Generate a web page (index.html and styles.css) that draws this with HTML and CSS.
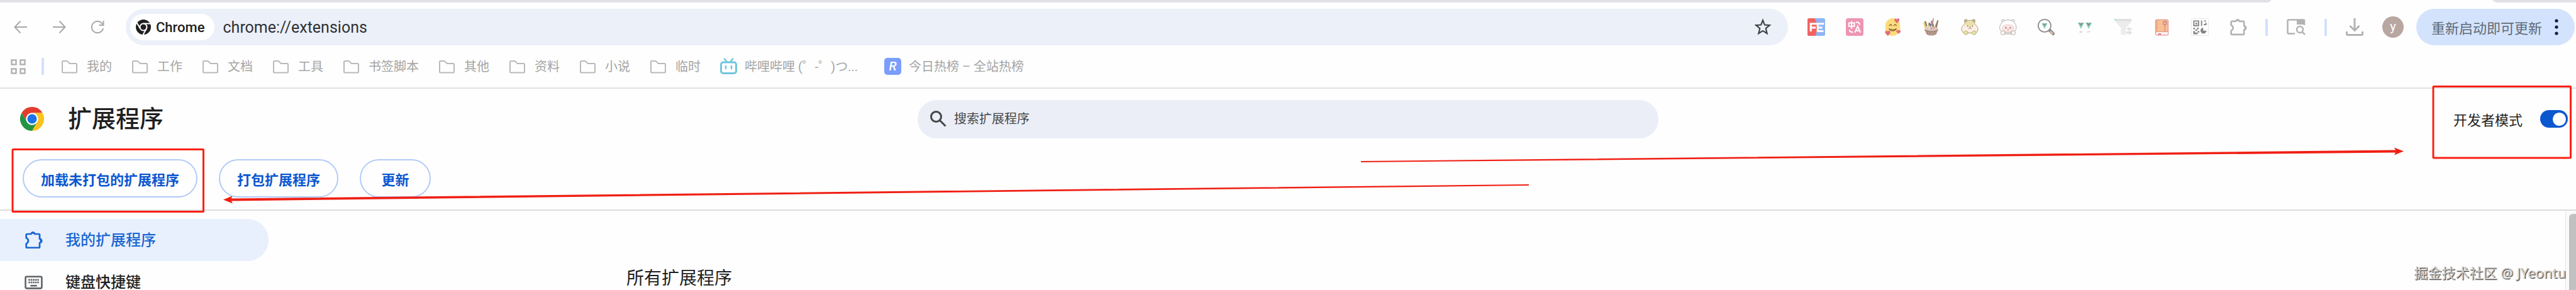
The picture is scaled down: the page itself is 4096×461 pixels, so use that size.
FILE: index.html
```html
<!DOCTYPE html>
<html lang="zh-CN">
<head>
    <meta charset="UTF-8">
    <meta name="viewport" content="width=device-width, initial-scale=1.0">
    <title>扩展程序</title>
    <link rel="stylesheet" href="styles.css">
</head>
<body>
    <!-- Icônes réutilisées -->
    <svg class="defs" aria-hidden="true">
        <symbol id="folder" viewBox="0 0 27 22">
            <path d="M2 19V3.500Q2 2 3.500 2H9.500L14 6H23.500Q25 6 25 7.500V19Q25 20.500 23.500 20.500H3.500Q2 20.500 2 19Z" fill="none" stroke="#b9b9b9" stroke-width="2"/>
        </symbol>
        <symbol id="puzzle" viewBox="0 0 32 32">
            <path d="M5 5.500H11.500A3.500 3.500 0 0 1 18 5.500H25Q26.500 5.500 26.500 7V14A3.500 3.500 0 0 1 26.500 21V28Q26.500 29.500 25 29.500H4.500Q3 29.500 3 28V22.500Q6.500 21 6.500 17.500Q6.500 14 3 12.500V7Q3 5.500 5 5.500Z" fill="none" stroke="currentColor" stroke-width="3" stroke-linejoin="round"/>
            <path d="M11 5a3.800 4 0 0 1 7.600 0zM27 13.500a4 3.800 0 0 1 0 7.600z" fill="currentColor"/>
        </symbol>
        <symbol id="vue" viewBox="0 0 12 12">
            <path d="M0 0H4L6 3.500L8 0H12L6 11.500Z" fill="#8cd6b6"/>
            <path d="M2.500 0H4.800L6 2L7.200 0H9.500L6 6.500Z" fill="#7d8a92"/>
        </symbol>
    </svg>

    <div class="tabstrip">
        <div class="strip-left"></div>
        <div class="strip-right"></div>
    </div>

    <!-- Barre d'outils -->
    <div class="toolbar">
        <div class="nav">
            <button aria-label="后退"><svg viewBox="0 0 22 22"><path d="M21 11H2M10.500 1.500L1.500 11L10.500 20.500"/></svg></button>
            <button aria-label="前进"><svg viewBox="0 0 22 22"><path d="M1 11H20M11.500 1.500L20.500 11L11.500 20.500"/></svg></button>
            <button aria-label="重新加载"><svg viewBox="0 0 22 22"><path d="M19 6.500A9.200 9.200 0 1 0 20 13M20.500 1V8H13.500"/></svg></button>
        </div>
        <div class="address">
            <span class="chip">
                <svg viewBox="0 0 24 24">
                    <circle cx="12" cy="12" r="12" fill="#1f1f1f"/>
                    <circle cx="12" cy="12" r="5.500" fill="none" stroke="#fff" stroke-width="2"/>
                    <path d="M12 6.500H24M7.200 14.800L1.500 5M16.800 14.800L11.500 24" stroke="#fff" stroke-width="2"/>
                </svg>
                Chrome
            </span>
            <input class="url" type="text" value="chrome://extensions" aria-label="地址">
            <button class="star" aria-label="收藏"><svg viewBox="0 0 26 26"><path d="M13 3L15.700 9.800L23 10.300L17.400 15L19.200 22.500L13 18.500L6.800 22.500L8.600 15L3 10.300L10.300 9.800Z"/></svg></button>
        </div>

        <div class="extensions">
            <svg viewBox="0 0 32 32">
                <rect width="32" height="32" rx="3" fill="#90b4f4"/>
                <path d="M3 0H13Q22 15 14 32H3Q0 32 0 29V3Q0 0 3 0Z" fill="#ef6461"/>
                <path d="M6 24V10H30M6 17H15M18.500 10V23.500H29M18.500 17H27" fill="none" stroke="#fff" stroke-width="3.500"/>
            </svg>
            <svg viewBox="0 0 32 32">
                <rect width="32" height="32" rx="4" fill="#ee94b4"/>
                <path d="M5.500 8.500H15.500V14.500H5.500ZM10.500 5V19M18 7.500H21Q25 7.500 25 12M6.500 21Q7 25.500 13 25.500M16.500 26L21.500 14.500L26.500 26M18 22.500H25" fill="none" stroke="#fff" stroke-width="2.300"/>
            </svg>
            <svg viewBox="0 0 32 32">
                <rect x="2" y="0" width="27" height="32" rx="13.500" fill="#fbdb7c"/>
                <path d="M9 14Q11.500 9 14 14M17.500 14Q20 9 22.500 14M8.500 19Q15.500 27 22.500 19Q15.500 23 8.500 19Z" fill="none" stroke="#8a6637" stroke-width="1.600"/>
                <path d="M23 9L18.500 4Q18 0 21 0.500L23 2Q25 -1 27.500 1.500Q28.500 5 23 9ZM6.500 32L2 27Q1 22 4.500 22.500L6.500 24Q9 21 11 24Q12 28 6.500 32ZM26 28L22 24.500Q21.500 21 24.500 21.500L26 22.500Q29 20 30 23.500Q30 26 26 28Z" fill="#e26d77"/>
            </svg>
            <svg viewBox="0 0 32 32">
                <path d="M6 19L3 6L6 5L10 17M10 18L11 8H14L15 19M18 18L15 5L18 4L22 17M21 18L27 3L29 4L26 18" fill="#90816f"/>
                <path d="M5 17L2.500 8" stroke="#f3d475" stroke-width="3"/>
                <path d="M18 10L20 0" stroke="#d68c98" stroke-width="2"/>
                <path d="M13 17L15 10" stroke="#7a6a78" stroke-width="3"/>
                <ellipse cx="16" cy="20" rx="12.500" ry="5" fill="#d9c7bd"/>
                <path d="M8 18v-4M12 20v-7M22 19v-6" stroke="#eee3b5" stroke-width="2.500"/>
                <path d="M21 19v-4M16 21v-5" stroke="#dc9aa6" stroke-width="2.500"/>
                <path d="M3.500 20Q16 26 28.500 20L25 29Q16 34 7 29Z" fill="#bb9e90"/>
                <path d="M8 23L10 30M13 24L14 31M19 24L18 31M24 23L22 30M4 22Q16 27 28 22" fill="none" stroke="#947c72"/>
            </svg>
            <svg viewBox="0 0 32 32">
                <g stroke="#a9a17b" stroke-width="1">
                    <circle cx="9" cy="5" r="3" fill="#c9b18a"/><circle cx="23" cy="5" r="3" fill="#c9b18a"/>
                    <path d="M8 7Q16 0 24 7Q25 11 29 14Q34 22 27 27H5Q-2 22 3 14Q7 11 8 7Z" fill="#ebdfae"/>
                </g>
                <path d="M3 15Q9 9 13 15Q16 17 19 15Q24 10 29 15Q32 22 26 25H6Q0 22 3 15Z" fill="#fdeee5"/>
                <circle cx="12" cy="14" r="1" fill="#69594c"/><circle cx="21" cy="14" r="1" fill="#69594c"/>
                <path d="M16.500 15V17.500M13.500 18Q15 20 16.500 17.500Q18 20 19.500 18" fill="none" stroke="#8b6856"/>
                <g fill="#e8e6a6" stroke="#a9ad78"><circle cx="9" cy="26.500" r="3.500"/><circle cx="24" cy="26.500" r="3.500"/></g>
            </svg>
            <svg viewBox="0 0 32 32">
                <g fill="#fff" stroke="#a8a0a0" stroke-width="1">
                    <circle cx="7" cy="5" r="2.500"/><circle cx="25" cy="5" r="2.500"/>
                    <path d="M6 26Q-2 20 2 12Q6 3 16 3Q26 3 30 12Q33 20 26 26Z"/>
                    <path d="M9 28.500H23" stroke="#8f8f9b"/>
                </g>
                <rect x="5.500" y="12" width="21" height="13" rx="6.500" fill="#fde4e1" stroke="#e6c6c3"/>
                <circle cx="12" cy="17.500" r="1.200" fill="#695454"/><circle cx="20" cy="17.500" r="1.200" fill="#695454"/>
                <path d="M14.500 20Q16 21.500 17.500 20" fill="none" stroke="#b27777"/>
                <g fill="#fffaf4" stroke="#a8a0a0"><circle cx="6.500" cy="26.500" r="3.800"/><circle cx="25.500" cy="26.500" r="3.800"/></g>
            </svg>
            <svg viewBox="0 0 32 32">
                <path d="M21 21L28 28" stroke="#8f8f8f" stroke-width="6" stroke-linecap="round"/>
                <path d="M23 24L27.500 28.500" stroke="#f2b7ad" stroke-width="3"/>
                <circle cx="12.500" cy="13.500" r="11.500" fill="#fff" stroke="#8f8f8f" stroke-width="2"/>
                <use href="#vue" x="6.500" y="9" width="12" height="11"/>
            </svg>
            <svg viewBox="0 0 32 32">
                <use href="#vue" x="3" y="8" width="12" height="12"/>
                <use href="#vue" x="17" y="8" width="12" height="12"/>
                <text x="6" y="26" font-size="5" fill="#999">v6</text>
                <text x="20" y="26" font-size="5" fill="#999">v7</text>
            </svg>
            <svg viewBox="0 0 32 32">
                <path d="M1 1H31V6L21 18V30H12V18L2 6Z" fill="#ececec"/>
                <path d="M1 1H31V5H3Z" fill="#e0e0e0"/><path d="M0 1H3V4H0Z" fill="#a5ead5"/>
                <path d="M22 19L27 15V18H32V21H27V23ZM32 26L27 22V24H22V28H27V31Z" fill="#e1e1e1"/>
            </svg>
            <svg viewBox="0 0 32 32">
                <rect x="5" y="2.500" width="23" height="28" rx="3" fill="#f9c193" stroke="#df8f81" stroke-width="1.200"/>
                <path d="M22 3V24" stroke="#e7a58a" stroke-width="3"/>
                <circle cx="22" cy="9" r="3" fill="#f4b9ae" stroke="#d27f87" stroke-width="1.500"/>
                <path d="M7.500 3V23" stroke="#e89a80" stroke-width="1.500"/>
                <path d="M7.500 24.500H28V30.500H7.500Q5 30.500 5 27.500Q5 24.500 7.500 24.500Z" fill="#fff4ee" stroke="#d98a95"/>
                <path d="M10 27.500H15V31L12.500 29.500L10 31Z" fill="#e17c90"/>
            </svg>
            <svg viewBox="0 0 32 32">
                <rect x="0.500" y="0.500" width="31" height="31" rx="2.500" fill="#fff" stroke="#e2e2e2"/>
                <path d="M5 5H13.500V13.500H5ZM19 4V14M27 5H23.500M27 8V11.500H23" fill="none" stroke="#858585" stroke-width="2.200"/>
                <path d="M8 8h3v3H8zM4 17h3v3H4zM11 17h3v3h-3zM8 20h3v3H8zM4 23h3v3h5v3H4zM12 23h3v3h-3zM22 17V22.500H28A5.500 5.500 0 1 1 22 17Z" fill="#858585"/>
            </svg>
            <svg class="puzzle" viewBox="0 0 32 32"><use href="#puzzle"/></svg>
        </div>

        <div class="actions">
            <span class="divider"></span>
            <svg class="tabsearch" viewBox="0 0 30 26">
                <path d="M28 10V3Q28 1.500 26.500 1.500H3Q1.500 1.500 1.500 3V22Q1.500 23.500 3 23.500H13" fill="none" stroke="#b3b3b3" stroke-width="2.500"/>
                <path d="M16 1H29V9H16Z" fill="#b3b3b3"/>
                <circle cx="21" cy="17" r="5" fill="#fff" stroke="#b3b3b3" stroke-width="2.500"/>
                <path d="M24.500 20.500L29 25" stroke="#b3b3b3" stroke-width="2.500"/>
            </svg>
            <span class="divider"></span>
            <svg class="download" viewBox="0 0 28 28">
                <path d="M14 0V19M6.500 12L14 19.500L21.500 12M1.500 21V25Q1.500 26.500 3 26.500H25Q26.500 26.500 26.500 25V21" fill="none" stroke="#b3b3b3" stroke-width="3"/>
            </svg>
            <span class="avatar">y</span>
        </div>
        <button class="update">重新启动即可更新
            <svg viewBox="0 0 6 26"><circle cx="3" cy="3" r="2.600"/><circle cx="3" cy="13" r="2.600"/><circle cx="3" cy="23" r="2.600"/></svg>
        </button>
    </div>

    <!-- Favoris -->
    <nav class="bookmarks">
        <svg class="grid-icon" viewBox="0 0 24 24"><path d="M1.500 1.500H8.500V8.500H1.500ZM15.500 1.500H22.500V8.500H15.500ZM1.500 15.500H8.500V22.500H1.500ZM15.500 15.500H22.500V22.500H15.500Z" fill="none" stroke="#b3b3b3" stroke-width="2.500"/></svg>
        <span class="divider"></span>
        <a href="#"><svg><use href="#folder"/></svg>我的</a>
        <a href="#"><svg><use href="#folder"/></svg>工作</a>
        <a href="#"><svg><use href="#folder"/></svg>文档</a>
        <a href="#"><svg><use href="#folder"/></svg>工具</a>
        <a href="#"><svg><use href="#folder"/></svg>书签脚本</a>
        <a href="#"><svg><use href="#folder"/></svg>其他</a>
        <a href="#"><svg><use href="#folder"/></svg>资料</a>
        <a href="#"><svg><use href="#folder"/></svg>小说</a>
        <a href="#"><svg><use href="#folder"/></svg>临时</a>
        <a class="site" href="#">
            <svg viewBox="0 0 27 27">
                <path d="M7 1.500L10.500 6M20 1.500L16.500 6" stroke="#6fc6e0" stroke-width="2.500" stroke-linecap="round"/>
                <rect x="1.500" y="7" width="24" height="17.500" rx="3.500" fill="#fff" stroke="#6fc6e0" stroke-width="3"/>
                <path d="M9 13V17M18 13V17" stroke="#6fc6e0" stroke-width="2.500" stroke-linecap="round"/>
            </svg>哔哩哔哩 (゜-゜)つ...
        </a>
        <a class="site" href="#"><span class="badge">R</span>今日热榜 – 全站热榜</a>
    </nav>

    <!-- En-tête de la page des extensions -->
    <header class="header">
        <div class="header-top">
            <div class="brand">
                <svg viewBox="0 0 48 48">
                    <circle cx="24" cy="24" r="24" fill="#fff"/>
                    <path d="M24 12H44.800A24 24 0 0 0 3.200 12L13.600 30A12 12 0 0 1 24 12Z" fill="#e33b2e"/>
                    <path d="M34.400 30L24 48A24 24 0 0 0 44.800 12H24A12 12 0 0 1 34.400 30Z" fill="#fcc31e"/>
                    <path d="M13.600 30L3.200 12A24 24 0 0 0 24 48L34.400 30A12 12 0 0 1 13.600 30Z" fill="#229342"/>
                    <circle cx="24" cy="24" r="12" fill="#fff"/>
                    <circle cx="24" cy="24" r="9.500" fill="#1a73e8"/>
                </svg>
                <h1>扩展程序</h1>
            </div>
            <label class="search">
                <svg viewBox="0 0 26 26"><circle cx="9.500" cy="9.500" r="8" /><path d="M15.500 15.500L24.500 24.500"/></svg>
                <input type="text" placeholder="搜索扩展程序" aria-label="搜索扩展程序">
            </label>
            <div class="dev-mode">
                <label for="devMode">开发者模式</label>
                <input type="checkbox" id="devMode" checked>
            </div>
        </div>
        <div class="dev-buttons">
            <button>加载未打包的扩展程序</button>
            <button>打包扩展程序</button>
            <button>更新</button>
        </div>
    </header>

    <!-- Contenu -->
    <div class="content">
        <div class="sidebar">
            <a class="selected" href="#"><svg viewBox="0 0 32 32"><use href="#puzzle"/></svg>我的扩展程序</a>
            <a href="#">
                <svg viewBox="0 0 28 28">
                    <rect x="1.500" y="5.500" width="25" height="18" rx="2" fill="none" stroke="#5f6368" stroke-width="2.500"/>
                    <path d="M6 10.500H22M6 14.500H22" stroke="#5f6368" stroke-width="2.500" stroke-dasharray="2.500 0.900"/>
                    <path d="M9 19.500H19" stroke="#5f6368" stroke-width="2.500"/>
                </svg>键盘快捷键
            </a>
        </div>
        <main>
            <h2>所有扩展程序</h2>
        </main>
        <div class="scrollbar"><div class="thumb"></div></div>
    </div>

    <!-- Annotations rouges -->
    <svg class="marks" viewBox="0 0 4096 461" aria-hidden="true">
        <rect x="20" y="237.500" width="303.500" height="99" rx="1"/>
        <rect x="3869" y="137.500" width="218.500" height="113.500" rx="1"/>
        <path class="arrow" d="M355 317.500L369 311.500L368 315.500L2431 293V295L368 319.500L370 323.500Z"/>
        <path class="arrow" d="M3822 240.500L3807 246.500L3809 242.500L2164 258V256L3809 238.500L3807 234.500Z"/>
    </svg>
    <div class="watermark">掘金技术社区 @ JYeontu</div>
</body>
</html>
```
FILE: styles.css
```css
* {
    margin: 0;
    padding: 0;
    box-sizing: border-box;
}

body {
    font-family: Roboto, "Noto Sans CJK SC", sans-serif;
    background-color: #fefefe;
    color: #1f1f1f;
    height: 100vh;
    display: flex;
    flex-direction: column;
    overflow: hidden;
    position: relative;
}

button, input {
    font-family: inherit;
    border: none;
    background: none;
    color: inherit;
}

a {
    color: inherit;
    text-decoration: none;
}

svg {
    display: block;
    flex: none;
}

.defs {
    position: absolute;
    width: 0;
    height: 0;
}

/* Bande des onglets */
.tabstrip {
    display: flex;
    justify-content: space-between;
    gap: 353px;
    height: 4px;
    flex: none;
}

.strip-left {
    flex: 1;
    background-color: #dfe1e5;
    border-bottom-right-radius: 8px 4px;
}

.strip-right {
    width: 132px;
    background-color: #dfe1e5;
    border-bottom-left-radius: 8px 4px;
}

/* Barre d'outils */
.toolbar {
    display: flex;
    align-items: center;
    padding: 10px 2px 0 22px;
    flex: none;
}

.nav {
    display: flex;
    gap: 39px;
    margin-right: 34px;
}

.nav svg {
    width: 22px;
    height: 22px;
    fill: none;
    stroke: #a8a8a8;
    stroke-width: 2;
}

.address {
    flex: 1;
    height: 58px;
    display: flex;
    align-items: center;
    padding: 0 26px 0 7px;
    background-color: #ebf0f9;
    border-radius: 29px;
}

.chip {
    display: flex;
    align-items: center;
    gap: 8px;
    height: 42px;
    padding: 0 15px 0 9px;
    margin-right: 14px;
    background-color: #fff;
    border-radius: 21px;
    font-size: 22px;
    font-weight: 500;
}

.chip svg {
    width: 24px;
    height: 24px;
}

.url {
    flex: 1;
    font-size: 25px;
    color: #303134;
}

.star svg {
    width: 28px;
    height: 28px;
    fill: none;
    stroke: #3c4043;
    stroke-width: 2;
}

.extensions {
    display: flex;
    align-items: center;
    gap: 33px;
    margin: 0 29px 0 31px;
}

.extensions svg {
    width: 28px;
    height: 28px;
}

.extensions .puzzle {
    color: #b3b3b3;
}

.actions {
    display: flex;
    align-items: center;
    gap: 30px;
    margin-right: 20px;
}

.divider {
    width: 4px;
    height: 27px;
    background-color: #d3e0fd;
}

.tabsearch {
    width: 30px;
    height: 26px;
}

.download {
    width: 28px;
    height: 28px;
}

.avatar {
    width: 34px;
    height: 34px;
    border-radius: 50%;
    background-color: #b8a6a1;
    color: #fff;
    font-size: 20px;
    line-height: 32px;
    text-align: center;
}

.update {
    display: flex;
    align-items: center;
    gap: 20px;
    height: 58px;
    padding: 0 26px 0 24px;
    border-radius: 29px;
    background-color: #d3e3fd;
    color: #5f6b76;
    font-size: 22px;
}

.update svg {
    width: 6px;
    height: 26px;
    fill: #0b1d42;
}

/* Favoris */
.bookmarks {
    display: flex;
    align-items: center;
    gap: 31px;
    height: 69px;
    padding-left: 17px;
    border-bottom: 2px solid #e1e1e3;
    color: #a5a5a5;
    font-size: 20px;
    line-height: 28px;
    flex: none;
}

.grid-icon {
    width: 24px;
    height: 24px;
}

.bookmarks .divider {
    margin: 0 -4px 0 -6px;
}

.bookmarks a {
    display: flex;
    align-items: center;
    gap: 14px;
}

.bookmarks a svg {
    width: 27px;
    height: 22px;
}

.bookmarks .site {
    gap: 12px;
    min-width: 230px;
}

.bookmarks .site svg {
    height: 27px;
}

.badge {
    width: 27px;
    height: 27px;
    border-radius: 5px;
    background-color: #7b9dfb;
    color: #fff;
    font-style: italic;
    font-weight: 500;
    line-height: 27px;
    text-align: center;
}

/* En-tête */
.header {
    border-bottom: 2px solid #dcdcdc;
    padding-bottom: 19px;
    flex: none;
}

.header-top {
    display: grid;
    grid-template-columns: 1fr minmax(0, 1178px) 1fr;
    align-items: center;
    height: 96px;
    padding: 0 13px;
    margin-bottom: 16px;
}

.brand {
    display: flex;
    align-items: center;
    gap: 38px;
    padding-left: 19px;
}

.brand svg {
    width: 38px;
    height: 38px;
}

h1 {
    font-size: 38px;
    font-weight: 500;
    line-height: 54px;
}

.search {
    display: flex;
    align-items: center;
    gap: 12px;
    height: 61px;
    padding: 0 20px;
    border-radius: 31px;
    background-color: #ebeef7;
}

.search svg {
    width: 26px;
    height: 26px;
    fill: none;
    stroke: #444746;
    stroke-width: 3;
}

.search input {
    flex: 1;
    font-size: 20px;
}

.search input::placeholder {
    color: #444746;
    opacity: 1;
}

.dev-mode {
    display: flex;
    align-items: center;
    justify-content: flex-end;
    gap: 28px;
    font-size: 22px;
}

.dev-mode input {
    appearance: none;
    display: flex;
    align-items: center;
    justify-content: flex-end;
    width: 44px;
    height: 28px;
    padding: 0 3px;
    border-radius: 14px;
    background-color: #0b57d0;
}

.dev-mode input::before {
    content: "";
    width: 21px;
    height: 21px;
    border-radius: 50%;
    background-color: #fff;
}

.dev-buttons {
    display: flex;
    gap: 34px;
    padding-left: 36px;
}

.dev-buttons button {
    min-width: 113px;
    height: 61px;
    padding: 0 27px;
    border: 2px solid #b3cbf8;
    border-radius: 31px;
    color: #0b57d0;
    font-size: 22px;
    font-weight: 700;
}

/* Contenu */
.content {
    display: flex;
    flex: 1;
    min-height: 0;
    overflow: hidden;
}

.sidebar {
    width: 427px;
    padding-top: 13px;
}

.sidebar a {
    display: flex;
    align-items: center;
    gap: 36px;
    height: 67px;
    padding-left: 39px;
    border-radius: 0 34px 34px 0;
    font-size: 24px;
    line-height: 32px;
    font-weight: 500;
}

.sidebar svg {
    width: 29px;
    height: 29px;
}

.sidebar .selected {
    background-color: #e8effd;
    color: #1967d2;
}

main {
    flex: 1;
    padding: 88px 0 0 569px;
}

h2 {
    font-size: 28px;
    font-weight: 400;
    line-height: 40px;
}

.scrollbar {
    width: 17px;
    padding: 5px 0 0 5px;
    border-left: 1px solid #e6e6e6;
    background-color: #fafafa;
}

.thumb {
    height: 100%;
    border-radius: 6px 0 0 0;
    background-color: #c1c1c1;
}

/* Annotations par-dessus la page */
.marks {
    position: absolute;
    top: 0;
    left: 0;
    width: 100%;
    pointer-events: none;
}

.marks rect {
    fill: none;
    stroke: #fb2013;
    stroke-width: 3;
}

.marks .arrow {
    fill: #f01f14;
}

.watermark {
    position: absolute;
    right: 16px;
    bottom: 13px;
    color: #d0d0d0;
    font-family: "Noto Sans", "Noto Sans CJK SC", sans-serif;
    font-size: 22px;
    line-height: 30px;
    text-shadow: 1px 1px 1px #222;
}
```
